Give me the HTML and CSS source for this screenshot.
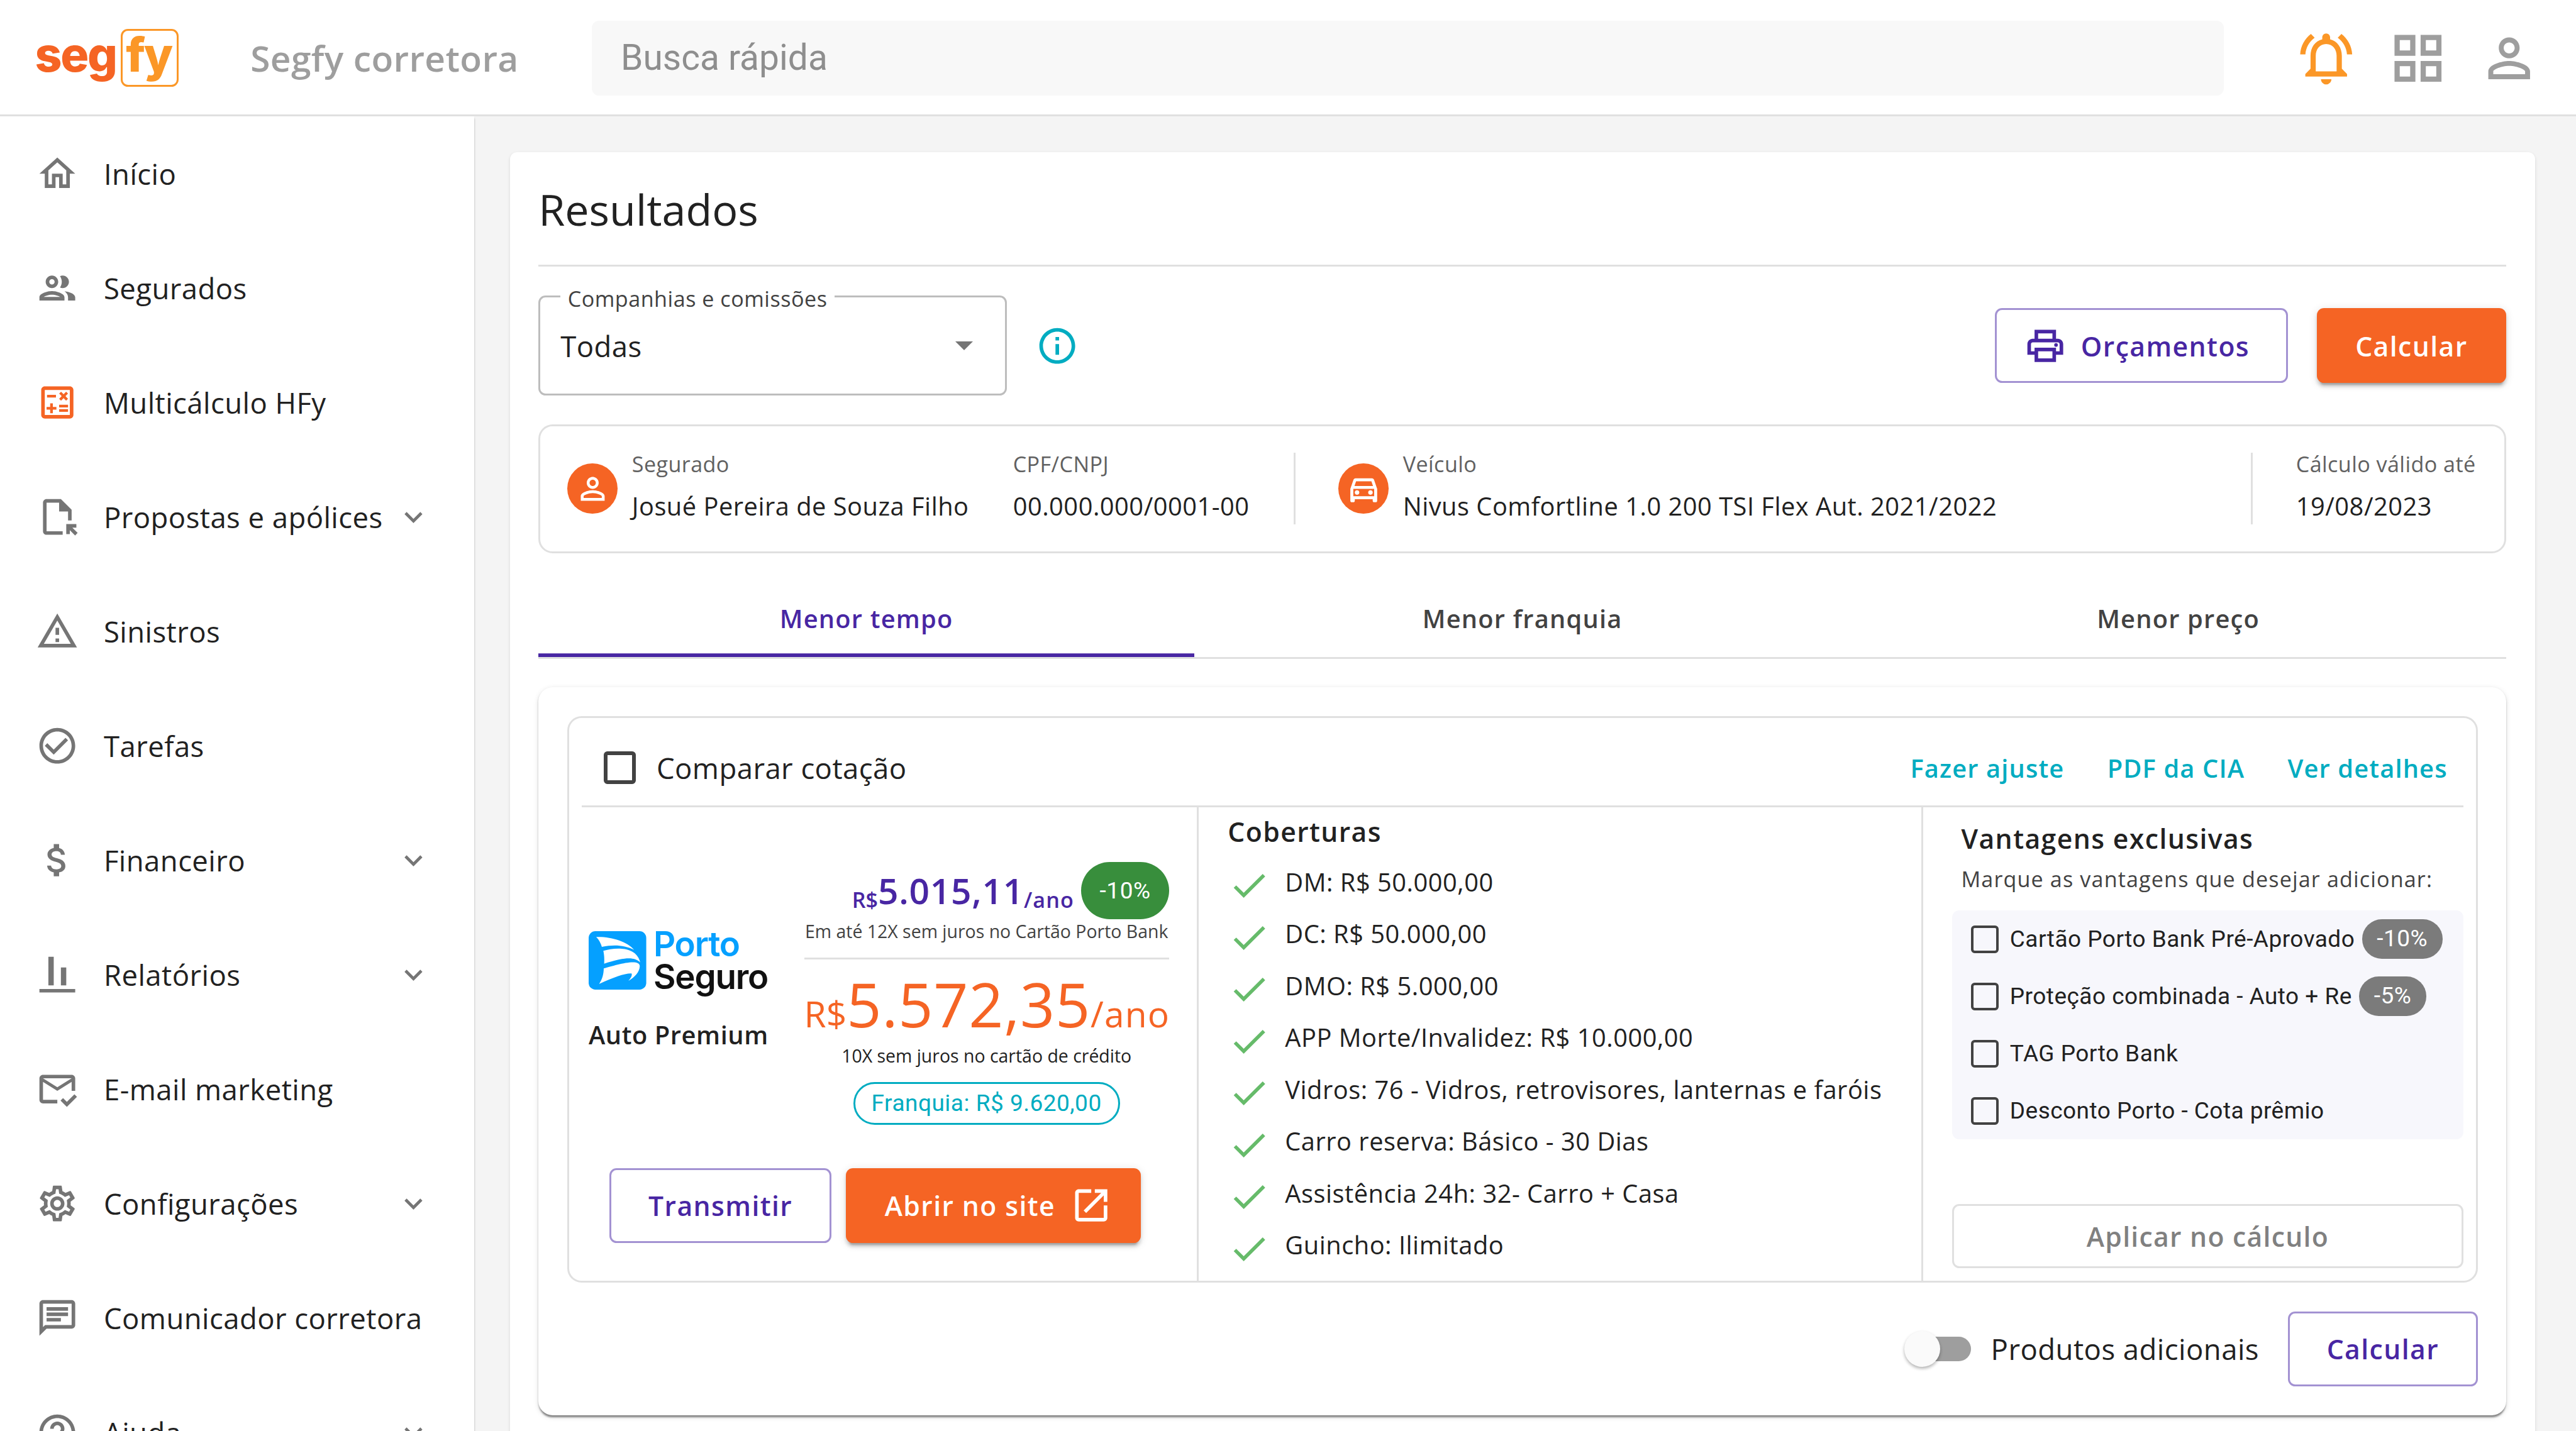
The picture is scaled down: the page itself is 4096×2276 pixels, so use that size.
FILE: index.html
```html
<!DOCTYPE html>
<html lang="pt-BR">
<head>
  <meta charset="UTF-8"/>
  <meta name="viewport" content="width=device-width, initial-scale=1"/>
  <title>Segfy - Resultados</title>
  <link rel="stylesheet" href="styles.css">
</head>
<body>
  <header class="topbar">
    <div class="logo"><span class="logo-seg">seg</span><span class="logo-fy">fy</span></div>
    <div class="company">Segfy corretora</div>
    <div class="search">Busca rápida</div>
    <div class="topbar-icons">
      <svg class="bell" viewBox="0 0 24 24"><path d="M12 22c1.1 0 2-.9 2-2h-4c0 1.1.9 2 2 2zm6-6v-5c0-3.07-1.63-5.64-4.5-6.32V4c0-.83-.67-1.5-1.5-1.5s-1.5.67-1.5 1.5v.68C7.64 5.36 6 7.92 6 11v5l-2 2v1h16v-1l-2-2zm-2 1H8v-6c0-2.48 1.51-4.5 4-4.5s4 2.02 4 4.5v6zM7.58 4.08L6.15 2.65C3.75 4.48 2.17 7.3 2.03 10.5h2c.15-2.65 1.51-4.97 3.55-6.42zm12.39 6.42h2c-.15-3.2-1.73-6.02-4.12-7.85l-1.42 1.43c2.02 1.45 3.39 3.77 3.54 6.42z"/></svg>
      <svg viewBox="0 0 24 24"><path d="M3 3v8h8V3H3zm6 6H5V5h4v4zm-6 4v8h8v-8H3zm6 6H5v-4h4v4zm4-16v8h8V3h-8zm6 6h-4V5h4v4zm-6 4v8h8v-8h-8zm6 6h-4v-4h4v4z"/></svg>
      <svg viewBox="0 0 24 24"><path d="M12 5.9c1.16 0 2.1.94 2.1 2.1s-.94 2.1-2.1 2.1S9.9 9.16 9.9 8s.94-2.1 2.1-2.1m0 9c2.97 0 6.1 1.46 6.1 2.1v1.1H5.9V17c0-.64 3.13-2.1 6.1-2.1M12 4C9.79 4 8 5.79 8 8s1.79 4 4 4 4-1.79 4-4-1.79-4-4-4zm0 9c-2.67 0-8 1.34-8 4v3h16v-3c0-2.66-5.33-4-8-4z"/></svg>
    </div>
  </header>

  <div class="layout">
    <nav class="sidebar">
      <a class="nav-item">
        <svg viewBox="0 0 24 24"><path d="M12 5.69l5 4.5V18h-2v-6H9v6H7v-7.81l5-4.5M12 3L2 12h3v8h6v-6h2v6h6v-8h3L12 3z"/></svg>
        <span>Início</span>
      </a>
      <a class="nav-item">
        <svg viewBox="0 0 24 24"><path d="M9 13.75c-2.34 0-7 1.17-7 3.5V19h14v-1.75c0-2.33-4.66-3.5-7-3.5zM4.34 17c.84-.58 2.87-1.25 4.66-1.25s3.82.67 4.66 1.25H4.34zM9 12c1.93 0 3.5-1.57 3.5-3.5S10.93 5 9 5 5.5 6.57 5.5 8.5 7.07 12 9 12zm0-5c.83 0 1.5.67 1.5 1.5S9.83 10 9 10s-1.5-.67-1.5-1.5S8.17 7 9 7zm7.04 6.81c1.16.84 1.96 1.96 1.96 3.44V19h4v-1.75c0-2.02-3.5-3.17-5.96-3.44zM15 12c1.93 0 3.5-1.57 3.5-3.5S16.93 5 15 5c-.54 0-1.04.13-1.5.35.63.89 1 1.98 1 3.15s-.37 2.26-1 3.15c.46.22.96.35 1.5.35z"/></svg>
        <span>Segurados</span>
      </a>
      <a class="nav-item active">
        <svg viewBox="0 0 24 24"><path d="M19 3H5c-1.1 0-2 .9-2 2v14c0 1.1.9 2 2 2h14c1.1 0 2-.9 2-2V5c0-1.1-.9-2-2-2zm0 16H5V5h14v14z"/><path d="M6.25 7.72h5v1.5h-5zM13 15.75h5v1.5h-5zM13 13.25h5v1.5h-5zM8 18h1.5v-2h2v-1.5h-2v-2H8v2H6V16h2zM14.09 10.95l1.41-1.41 1.41 1.41 1.06-1.06-1.41-1.42 1.41-1.41L16.91 6 15.5 7.41 14.09 6l-1.06 1.06 1.41 1.41-1.41 1.42z"/></svg>
        <span>Multicálculo HFy</span>
      </a>
      <a class="nav-item">
        <svg viewBox="0 0 24 24"><path d="M15 22H6c-1.1 0-2-.9-2-2V4c0-1.1.9-2 2-2h8l6 6v6h-2V9h-5V4H6v16h9v2zM19 21.66v-2.24l2.95 2.95 1.41-1.41L20.41 18h2.24v-2H17v5.66h2z"/></svg>
        <span>Propostas e apólices</span>
        <svg class="chevron" viewBox="0 0 24 24"><path d="M16.59 8.59L12 13.17 7.41 8.59 6 10l6 6 6-6z"/></svg>
      </a>
      <a class="nav-item">
        <svg viewBox="0 0 24 24"><path d="M12 5.99L19.53 19H4.47L12 5.99M12 2L1 21h22L12 2zm1 14h-2v2h2v-2zm0-6h-2v4h2v-4z"/></svg>
        <span>Sinistros</span>
      </a>
      <a class="nav-item">
        <svg viewBox="0 0 24 24"><path d="M12 2C6.48 2 2 6.48 2 12s4.48 10 10 10 10-4.48 10-10S17.52 2 12 2zm0 18c-4.41 0-8-3.59-8-8s3.59-8 8-8 8 3.59 8 8-3.59 8-8 8zm4.59-12.42L10 14.17l-3.59-3.58L5 12l5 5 8-8-1.41-1.42z"/></svg>
        <span>Tarefas</span>
      </a>
      <a class="nav-item">
        <svg viewBox="0 0 24 24"><path d="M11.8 10.9c-2.27-.59-3-1.2-3-2.15 0-1.09 1.01-1.85 2.7-1.85 1.78 0 2.44.85 2.5 2.1h2.21c-.07-1.72-1.12-3.3-3.21-3.81V3h-3v2.16c-1.94.42-3.5 1.68-3.5 3.61 0 2.31 1.91 3.46 4.7 4.13 2.5.6 3 1.48 3 2.41 0 .69-.49 1.79-2.7 1.79-2.06 0-2.87-.92-2.98-2.1h-2.2c.12 2.19 1.76 3.42 3.68 3.83V21h3v-2.15c1.95-.37 3.5-1.5 3.5-3.55 0-2.84-2.43-3.81-4.7-4.4z"/></svg>
        <span>Financeiro</span>
        <svg class="chevron" viewBox="0 0 24 24"><path d="M16.59 8.59L12 13.17 7.41 8.59 6 10l6 6 6-6z"/></svg>
      </a>
      <a class="nav-item">
        <svg viewBox="0 0 24 24"><path d="M22 22H2v-2h20v2zM10 2H7v16h3V2zm7 6h-3v10h3V8z"/></svg>
        <span>Relatórios</span>
        <svg class="chevron" viewBox="0 0 24 24"><path d="M16.59 8.59L12 13.17 7.41 8.59 6 10l6 6 6-6z"/></svg>
      </a>
      <a class="nav-item">
        <svg viewBox="0 0 24 24"><path d="M12 18H4V8l8 5 8-5v5h2V6c0-1.1-.9-2-2-2H4c-1.1 0-2 .9-2 2v12c0 1.1.9 2 2 2h8v-2zm8-12l-8 5-8-5h16zM17.34 22l-3.54-3.54 1.41-1.41 2.12 2.12 4.24-4.24L23 16.34 17.34 22z"/></svg>
        <span>E-mail marketing</span>
      </a>
      <a class="nav-item">
        <svg viewBox="0 0 24 24"><path d="M19.43 12.98c.04-.32.07-.64.07-.98 0-.34-.03-.66-.07-.98l2.11-1.65c.19-.15.24-.42.12-.64l-2-3.46c-.09-.16-.26-.25-.44-.25-.06 0-.12.01-.17.03l-2.49 1c-.52-.4-1.08-.73-1.69-.98l-.38-2.65C14.46 2.18 14.25 2 14 2h-4c-.25 0-.46.18-.49.42l-.38 2.65c-.61.25-1.17.59-1.69.98l-2.49-1c-.06-.02-.12-.03-.18-.03-.17 0-.34.09-.43.25l-2 3.46c-.13.22-.07.49.12.64l2.11 1.65c-.04.32-.07.65-.07.98 0 .33.03.66.07.98l-2.11 1.65c-.19.15-.24.42-.12.64l2 3.46c.09.16.26.25.44.25.06 0 .12-.01.17-.03l2.49-1c.52.4 1.08.73 1.69.98l.38 2.65c.03.24.24.42.49.42h4c.25 0 .46-.18.49-.42l.38-2.65c.61-.25 1.17-.59 1.69-.98l2.49 1c.06.02.12.03.18.03.17 0 .34-.09.43-.25l2-3.46c.12-.22.07-.49-.12-.64l-2.11-1.65zm-1.98-1.71c.04.31.05.52.05.73 0 .21-.02.43-.05.73l-.14 1.13.89.7 1.08.84-.7 1.21-1.27-.51-1.04-.42-.9.68c-.43.32-.84.56-1.25.73l-1.06.43-.16 1.13-.2 1.35h-1.4l-.19-1.35-.16-1.13-1.06-.43c-.43-.18-.83-.41-1.23-.71l-.91-.7-1.06.43-1.27.51-.7-1.21 1.08-.84.89-.7-.14-1.13c-.03-.31-.05-.54-.05-.74s.02-.43.05-.73l.14-1.13-.89-.7-1.08-.84.7-1.21 1.27.51 1.04.42.9-.68c.43-.32.84-.56 1.25-.73l1.06-.43.16-1.13.2-1.35h1.39l.19 1.35.16 1.13 1.06.43c.43.18.83.41 1.23.71l.91.7 1.06-.43 1.27-.51.7 1.21-1.07.85-.89.7.14 1.13zM12 8c-2.21 0-4 1.79-4 4s1.79 4 4 4 4-1.79 4-4-1.79-4-4-4zm0 6c-1.1 0-2-.9-2-2s.9-2 2-2 2 .9 2 2-.9 2-2 2z"/></svg>
        <span>Configurações</span>
        <svg class="chevron" viewBox="0 0 24 24"><path d="M16.59 8.59L12 13.17 7.41 8.59 6 10l6 6 6-6z"/></svg>
      </a>
      <a class="nav-item">
        <svg viewBox="0 0 24 24"><path d="M4 4h16v12H5.17L4 17.17V4m0-2c-1.1 0-1.99.9-1.99 2L2 22l4-4h14c1.1 0 2-.9 2-2V4c0-1.1-.9-2-2-2H4zm2 10h8v2H6v-2zm0-3h12v2H6V9zm0-3h12v2H6V6z"/></svg>
        <span>Comunicador corretora</span>
      </a>
      <a class="nav-item">
        <svg viewBox="0 0 24 24"><path d="M11 18h2v-2h-2v2zm1-16C6.48 2 2 6.48 2 12s4.48 10 10 10 10-4.48 10-10S17.52 2 12 2zm0 18c-4.41 0-8-3.59-8-8s3.59-8 8-8 8 3.59 8 8-3.59 8-8 8zm0-14c-2.21 0-4 1.79-4 4h2c0-1.1.9-2 2-2s2 .9 2 2c0 2-3 1.75-3 5h2c0-2.25 3-2.5 3-5 0-2.21-1.79-4-4-4z"/></svg>
        <span>Ajuda</span>
        <svg class="chevron" viewBox="0 0 24 24"><path d="M16.59 8.59L12 13.17 7.41 8.59 6 10l6 6 6-6z"/></svg>
      </a>
    </nav>

    <main class="content">
      <section class="page">
        <h1>Resultados</h1>

        <div class="toolbar">
          <div class="select">
            <span class="select-label">Companhias e comissões</span>
            <span class="select-value">Todas</span>
            <span class="select-arrow"></span>
          </div>
          <svg class="info" viewBox="0 0 24 24"><path d="M11 7h2v2h-2zm0 4h2v6h-2zm1-9C6.48 2 2 6.48 2 12s4.48 10 10 10 10-4.48 10-10S17.52 2 12 2zm0 18c-4.41 0-8-3.59-8-8s3.59-8 8-8 8 3.59 8 8-3.59 8-8 8z"/></svg>
          <button class="btn btn-outline btn-print">
            <svg viewBox="0 0 24 24"><path d="M19 8h-1V3H6v5H5c-1.66 0-3 1.34-3 3v6h4v4h12v-4h4v-6c0-1.66-1.34-3-3-3zM8 5h8v3H8V5zm8 12v2H8v-4h8v2zm2-2v-2H6v2H4v-4c0-.55.45-1 1-1h14c.55 0 1 .45 1 1v4h-2z"/><circle cx="18" cy="11.5" r="1"/></svg>
            <span>Orçamentos</span>
          </button>
          <button class="btn btn-solid">Calcular</button>
        </div>

        <div class="summary">
          <div class="avatar"><svg viewBox="0 0 24 24"><path d="M12 5.9c1.16 0 2.1.94 2.1 2.1s-.94 2.1-2.1 2.1S9.9 9.16 9.9 8s.94-2.1 2.1-2.1m0 9c2.97 0 6.1 1.46 6.1 2.1v1.1H5.9V17c0-.64 3.13-2.1 6.1-2.1M12 4C9.79 4 8 5.79 8 8s1.79 4 4 4 4-1.79 4-4-1.79-4-4-4zm0 9c-2.67 0-8 1.34-8 4v3h16v-3c0-2.66-5.33-4-8-4z"/></svg></div>
          <div class="field field-name"><span>Segurado</span><strong>Josué Pereira de Souza Filho</strong></div>
          <div class="field field-doc"><span>CPF/CNPJ</span><strong>00.000.000/0001-00</strong></div>
          <div class="avatar"><svg viewBox="0 0 24 24"><path d="M18.92 6.01C18.72 5.42 18.16 5 17.5 5h-11c-.66 0-1.21.42-1.42 1.01L3 12v8c0 .55.45 1 1 1h1c.55 0 1-.45 1-1v-1h12v1c0 .55.45 1 1 1h1c.55 0 1-.45 1-1v-8l-2.08-5.99zM6.85 7h10.29l1.08 3.11H5.77L6.85 7zM19 17H5v-5h14v5z"/><circle cx="7.5" cy="14.5" r="1.5"/><circle cx="16.5" cy="14.5" r="1.5"/></svg></div>
          <div class="field"><span>Veículo</span><strong>Nivus Comfortline 1.0 200 TSI Flex Aut. 2021/2022</strong></div>
          <div class="field field-date"><span>Cálculo válido até</span><strong>19/08/2023</strong></div>
        </div>

        <div class="tabs">
          <div class="tab selected">Menor tempo</div>
          <div class="tab">Menor franquia</div>
          <div class="tab">Menor preço</div>
        </div>

        <div class="result">
          <div class="quote">
            <div class="quote-head">
              <span class="checkbox"></span>
              <span class="compare">Comparar cotação</span>
              <a class="link">Fazer ajuste</a>
              <a class="link">PDF da CIA</a>
              <a class="link">Ver detalhes</a>
            </div>
            <div class="quote-body">
              <div class="col-price">
                <div class="offer">
                  <div class="insurer">
                    <div class="porto">
                      <svg viewBox="0 0 275 279">
                        <rect width="275" height="279" rx="32" fill="#05a0ff"/>
                        <path fill="#fff" d="M36 28C105 25 185 50 217 89C170 66 120 63 63 75C58 58 50 42 36 28zM70 94C125 78 228 70 246 149C215 118 160 128 74 155C75 135 75 115 70 94zM72 178C120 165 245 125 244 168C243 195 220 220 190 237C204 221 208 212 205 202C175 200 120 220 50 252C65 230 72 205 72 178z"/>
                      </svg>
                      <div class="porto-name"><span>Porto</span><span>Seguro</span></div>
                    </div>
                    <div class="plan">Auto Premium</div>
                  </div>
                  <div class="prices">
                    <div class="price-card">
                      <span class="amount"><small>R$</small>5.015,11<small class="per">/ano</small></span>
                      <span class="badge-green">-10%</span>
                    </div>
                    <div class="note note-soft">Em até 12X sem juros no Cartão Porto Bank</div>
                    <div class="price-full"><small>R$</small>5.572,35<small class="per">/ano</small></div>
                    <div class="note">10X sem juros no cartão de crédito</div>
                    <div class="chip">Franquia: R$ 9.620,00</div>
                  </div>
                </div>
                <div class="actions">
                  <button class="btn btn-outline">Transmitir</button>
                  <button class="btn btn-solid btn-site">
                    <span>Abrir no site</span>
                    <svg viewBox="0 0 24 24"><path d="M19 19H5V5h7V3H5c-1.11 0-2 .9-2 2v14c0 1.1.89 2 2 2h14c1.1 0 2-.9 2-2v-7h-2v7zM14 3v2h3.59l-9.83 9.83 1.41 1.41L19 6.41V10h2V3h-7z"/></svg>
                  </button>
                </div>
              </div>

              <div class="col-cover">
                <h2>Coberturas</h2>
                <ul class="covers">
                  <li><svg viewBox="0 0 24 24"><path d="M9 16.2L4.8 12l-1.4 1.4L9 19 21 7l-1.4-1.4L9 16.2z"/></svg>DM: R$ 50.000,00</li>
                  <li><svg viewBox="0 0 24 24"><path d="M9 16.2L4.8 12l-1.4 1.4L9 19 21 7l-1.4-1.4L9 16.2z"/></svg>DC: R$ 50.000,00</li>
                  <li><svg viewBox="0 0 24 24"><path d="M9 16.2L4.8 12l-1.4 1.4L9 19 21 7l-1.4-1.4L9 16.2z"/></svg>DMO: R$ 5.000,00</li>
                  <li><svg viewBox="0 0 24 24"><path d="M9 16.2L4.8 12l-1.4 1.4L9 19 21 7l-1.4-1.4L9 16.2z"/></svg>APP Morte/Invalidez: R$ 10.000,00</li>
                  <li><svg viewBox="0 0 24 24"><path d="M9 16.2L4.8 12l-1.4 1.4L9 19 21 7l-1.4-1.4L9 16.2z"/></svg>Vidros: 76 - Vidros, retrovisores, lanternas e faróis</li>
                  <li><svg viewBox="0 0 24 24"><path d="M9 16.2L4.8 12l-1.4 1.4L9 19 21 7l-1.4-1.4L9 16.2z"/></svg>Carro reserva: Básico - 30 Dias</li>
                  <li><svg viewBox="0 0 24 24"><path d="M9 16.2L4.8 12l-1.4 1.4L9 19 21 7l-1.4-1.4L9 16.2z"/></svg>Assistência 24h: 32- Carro + Casa</li>
                  <li><svg viewBox="0 0 24 24"><path d="M9 16.2L4.8 12l-1.4 1.4L9 19 21 7l-1.4-1.4L9 16.2z"/></svg>Guincho: Ilimitado</li>
                </ul>
              </div>

              <div class="col-perks">
                <h2>Vantagens exclusivas</h2>
                <p>Marque as vantagens que desejar adicionar:</p>
                <ul class="perks">
                  <li><span class="checkbox small"></span>Cartão Porto Bank Pré-Aprovado<span class="badge">-10%</span></li>
                  <li><span class="checkbox small"></span>Proteção combinada - Auto + Re<span class="badge">-5%</span></li>
                  <li><span class="checkbox small"></span>TAG Porto Bank</li>
                  <li><span class="checkbox small"></span>Desconto Porto - Cota prêmio</li>
                </ul>
                <button class="btn btn-disabled">Aplicar no cálculo</button>
              </div>
            </div>
          </div>

          <div class="result-foot">
            <span class="toggle"></span>
            <span class="toggle-label">Produtos adicionais</span>
            <button class="btn btn-outline">Calcular</button>
          </div>
        </div>
      </section>
    </main>
  </div>
</body>
</html>
```
FILE: styles.css
```css
/* 1rem = 10px on a 1440px wide layout */
html {
  --line: .106rem;
  font-size: calc(100vw / 144);
}

*, *::before, *::after {
  box-sizing: border-box;
}

body {
  margin: 0;
  height: 100vh;
  overflow: hidden;
  background: #f4f4f4;
  color: #212121;
  font-family: "Open Sans", "Noto Sans", sans-serif;
  font-size: 1.6rem;
}

h1, h2, p, ul {
  margin: 0;
  padding: 0;
  font-weight: 400;
}
ul { list-style: none; }
svg {
  display: block;
  flex: none;
  fill: currentColor;
}

/* Top bar */
.topbar {
  display: flex;
  align-items: center;
  height: 6.5rem;
  padding: .1rem 2rem 0 1.95rem;
  background: #fff;
  border-bottom: var(--line) solid #e0e0e0;
}
.logo {
  display: flex;
  align-items: center;
  width: 12.05rem;
  font-family: Inter, sans-serif;
  font-size: 2.64rem;
  font-weight: 800;
  line-height: 1;
}
.logo-seg {
  width: 4.8rem;
  padding-bottom: .38rem;
  color: #f56424;
  letter-spacing: -.08rem;
}
.logo-fy {
  width: 3.23rem;
  height: 3.23rem;
  padding-right: .1rem;
  line-height: 2.64rem;
  text-align: center;
  color: #fb9727;
  letter-spacing: -.08rem;
  border: var(--line) solid #fb9727;
  border-radius: .4rem;
}
.company {
  width: 19.1rem;
  font-size: 2rem;
  font-weight: 600;
  letter-spacing: .013rem;
  color: #9e9e9e;
}
.search {
  width: 91.2rem;
  height: 4.2rem;
  padding: 0 1.6rem;
  line-height: 4.15rem;
  font-family: Roboto, sans-serif;
  font-size: 2rem;
  color: #8e8e8e;
  background: #f8f8f8;
  border-radius: .4rem;
}
.topbar-icons {
  display: flex;
  gap: 1.6rem;
  margin-left: auto;
  color: #9e9e9e;
}
.topbar-icons svg {
  width: 3.5rem;
  height: 3.5rem;
}
.topbar-icons .bell { color: #fb9727; }

.layout {
  display: flex;
  height: calc(100vh - 6.5rem);
}

/* Sidebar */
.sidebar {
  flex: none;
  width: 26.5rem;
  overflow: hidden;
  background: #fff;
  box-shadow: 0 .1rem .1rem rgba(0, 0, 0, .3);
}
.nav-item {
  display: flex;
  align-items: center;
  height: 6.4rem;
  padding: 0 2.4rem 0 2rem;
  letter-spacing: .015rem;
  white-space: nowrap;
}
.nav-item svg {
  width: 2.4rem;
  height: 2.4rem;
  margin-right: 1.4rem;
  color: #757575;
}
.nav-item.active svg { color: #f56424; }
.nav-item .chevron {
  width: 2rem;
  height: 2rem;
  margin: 0 0 0 auto;
}

/* Page */
.content {
  flex: 1;
  min-width: 0;
  padding: 2rem 2.3rem 0 2rem;
  overflow: hidden;
}
.page {
  height: 80rem;
  padding: 1.6rem;
  background: #fff;
  border-radius: .4rem;
  box-shadow: 0 .1rem .2rem rgba(0, 0, 0, .12);
}
h1 {
  padding-bottom: 1.5rem;
  font-size: 2.4rem;
  line-height: 3.2rem;
  border-bottom: var(--line) solid #e0e0e0;
}

/* Buttons */
.btn {
  display: flex;
  align-items: center;
  justify-content: center;
  gap: .8rem;
  height: 4.2rem;
  margin: 0;
  padding: 0 2.1rem;
  font-family: inherit;
  font-size: 1.5rem;
  font-weight: 600;
  letter-spacing: .05rem;
  white-space: nowrap;
  border: var(--line) solid transparent;
  border-radius: .4rem;
}
.btn svg {
  width: 2.4rem;
  height: 2.4rem;
}
.btn-outline {
  color: #4826a3;
  background: #fff;
  border-color: #a392d2;
}
.btn-solid {
  color: #fff;
  background: #f56424;
  box-shadow: 0 .3rem .1rem -.2rem rgba(0, 0, 0, .2), 0 .2rem .2rem rgba(0, 0, 0, .14), 0 .1rem .5rem rgba(0, 0, 0, .12);
}
.btn-disabled {
  height: 3.6rem;
  margin-top: auto;
  letter-spacing: .045rem;
  color: #808080;
  background: #fff;
  border-color: #e0e0e0;
}

/* Toolbar */
.toolbar {
  display: flex;
  align-items: center;
  gap: 1.6rem;
  margin-top: 1.62rem;
}
.select {
  position: relative;
  display: flex;
  align-items: center;
  justify-content: space-between;
  width: 26.2rem;
  height: 5.6rem;
  padding: 0 1.8rem 0 1.13rem;
  letter-spacing: .015rem;
  border: var(--line) solid #bdbdbd;
  border-radius: .4rem;
}
.select-label {
  position: absolute;
  top: -.82rem;
  left: 1.13rem;
  padding: 0 .4rem;
  font-size: 1.2rem;
  line-height: 1.8rem;
  letter-spacing: .018rem;
  color: #424242;
  background: #fff;
}
.select-arrow {
  border: .5rem solid transparent;
  border-top-color: #757575;
  border-bottom: 0;
}
.info {
  width: 2.4rem;
  height: 2.4rem;
  color: #00acc1;
}
.btn-print {
  justify-content: flex-start;
  width: 16.4rem;
  margin-left: auto;
  padding: 0 0 0 1.52rem;
}
.toolbar .btn-solid,
.result-foot .btn { width: 10.6rem; }

/* Summary */
.summary {
  display: flex;
  align-items: center;
  height: 7.2rem;
  margin-top: 1.6rem;
  padding: 0 1.6rem 0 1.52rem;
  border: var(--line) solid #e0e0e0;
  border-radius: .8rem;
}
.avatar {
  display: flex;
  align-items: center;
  justify-content: center;
  width: 2.8rem;
  height: 2.8rem;
  margin-right: .8rem;
  color: #fff;
  background: #f56424;
  border-radius: 50%;
}
.avatar svg {
  width: 2rem;
  height: 2rem;
}
.field {
  display: flex;
  flex-direction: column;
  justify-content: space-between;
  height: 4rem;
}
.field span {
  font-size: 1.2rem;
  line-height: 1.3rem;
  letter-spacing: .015rem;
  color: #616161;
}
.field strong {
  font-size: 1.4rem;
  font-weight: 400;
  line-height: 2rem;
  letter-spacing: .0175rem;
}
.field-name { width: 21.3rem; }
.field-doc {
  width: 15.8rem;
  margin-right: 2.4rem;
  border-right: var(--line) solid #e0e0e0;
}
.field-date {
  margin-left: auto;
  padding-left: 2.4rem;
  border-left: var(--line) solid #e0e0e0;
}

/* Tabs */
.tabs {
  display: flex;
  margin-top: 1.6rem;
  border-bottom: var(--line) solid #e0e0e0;
}
.tab {
  flex: 1;
  height: 4.2rem;
  font-size: 1.4rem;
  font-weight: 600;
  line-height: 4.16rem;
  letter-spacing: .042rem;
  text-align: center;
  color: #424242;
}
.tab.selected {
  color: #4826a3;
  box-shadow: inset 0 -.2rem #4826a3;
}

/* Result card */
.result {
  margin-top: 1.6rem;
  padding: 1.6rem;
  border-radius: .8rem;
  box-shadow: 0 .2rem .1rem -.1rem rgba(0, 0, 0, .3), 0 .1rem .1rem rgba(0, 0, 0, .2), 0 .1rem .3rem rgba(0, 0, 0, .12);
}
.quote {
  display: flex;
  flex-direction: column;
  height: 31.7rem;
  padding: .7rem .7rem 0;
  border: var(--line) solid #e0e0e0;
  border-radius: .8rem;
}
.quote-head {
  display: flex;
  align-items: center;
  height: 4.3rem;
  padding: 0 .88rem 0 1.25rem;
  border-bottom: var(--line) solid #e0e0e0;
}
.checkbox {
  flex: none;
  width: 1.8rem;
  height: 1.8rem;
  border: .212rem solid #424242;
  border-radius: .2rem;
}
.checkbox.small {
  width: 1.55rem;
  height: 1.55rem;
  margin-right: .62rem;
  border-width: .15rem;
}
.compare {
  margin: 0 auto 0 1.15rem;
  letter-spacing: .015rem;
}
.link {
  margin-left: 2.4rem;
  font-size: 1.4rem;
  font-weight: 600;
  letter-spacing: .04rem;
  color: #00acc1;
}
.quote-body {
  display: flex;
  flex: 1;
}

/* Price column */
.col-price {
  width: 34.5rem;
  padding: 3.07rem 1.55rem 0 .4rem;
  border-right: var(--line) solid #e0e0e0;
}
.offer {
  display: flex;
  justify-content: space-between;
}
.insurer { padding-top: 3.85rem; }
.porto {
  display: flex;
  align-items: center;
  gap: .4rem;
  height: 3.3rem;
}
.porto svg {
  width: 3.22rem;
  height: 3.27rem;
}
.porto-name {
  display: flex;
  flex-direction: column;
  font-family: Inter, sans-serif;
  font-size: 1.92rem;
  font-weight: 600;
  line-height: 1.86rem;
  letter-spacing: -.04rem;
  color: #111;
}
.porto-name span:first-child {
  font-weight: 600;
  letter-spacing: -.04rem;
  color: #05a0ff;
}
.plan {
  margin-top: 1.55rem;
  font-size: 1.4rem;
  font-weight: 600;
  line-height: 2rem;
  letter-spacing: .02rem;
}
.prices {
  width: 20.4rem;
  text-align: center;
}
.price-card {
  display: flex;
  align-items: center;
  justify-content: flex-end;
  gap: .4rem;
  height: 3.2rem;
  color: #4826a3;
}
.amount {
  font-size: 2rem;
  font-weight: 600;
  line-height: 3.2rem;
  letter-spacing: .025rem;
}
.amount small {
  font-size: 1.2rem;
  line-height: 1;
  letter-spacing: 0;
  vertical-align: -.2rem;
}
.badge-green {
  width: 4.9rem;
  font-family: Roboto, sans-serif;
  font-size: 1.3rem;
  line-height: 3.2rem;
  letter-spacing: .02rem;
  color: #fff;
  background: #388e3c;
  border-radius: 1.6rem;
}
.note {
  font-size: 1rem;
  line-height: 1.4rem;
  white-space: nowrap;
}
.note-soft {
  padding-bottom: .75rem;
  color: #424242;
  border-bottom: var(--line) solid #e0e0e0;
}
.price-full {
  margin: .5rem 0 .2rem;
  font-size: 3.4rem;
  line-height: 4rem;
  letter-spacing: .025rem;
  white-space: nowrap;
  color: #f56424;
}
.price-full small {
  font-size: 2rem;
  line-height: 1;
  letter-spacing: 0;
}
.amount .per,
.price-full .per { letter-spacing: .04rem; }
.chip {
  width: 14.9rem;
  height: 2.4rem;
  margin: .75rem auto 0;
  font-family: Roboto, sans-serif;
  font-size: 1.3rem;
  line-height: 2.2rem;
  letter-spacing: .018rem;
  color: #00acc1;
  border: var(--line) solid #00acc1;
  border-radius: 1.2rem;
}
.actions {
  display: flex;
  justify-content: center;
  gap: .8rem;
  margin: 2.4rem .4rem 0 0;
}
.actions .btn { width: 12.4rem; }
.actions .btn-site {
  gap: .8rem;
  width: 16.5rem;
  padding: 0 1.5rem 0 2.1rem;
}

/* Coverages */
h2 {
  font-size: 1.5rem;
  font-weight: 600;
  line-height: 2rem;
  letter-spacing: .05rem;
}
.col-cover {
  width: 40.5rem;
  padding: .35rem 0 0 1.63rem;
  border-right: var(--line) solid #e0e0e0;
}
.covers { padding-top: .37rem; }
.covers li {
  display: flex;
  align-items: center;
  gap: .8rem;
  height: 2.9rem;
  font-size: 1.4rem;
  letter-spacing: .018rem;
}
.covers svg {
  width: 2.4rem;
  height: 2.4rem;
  margin-top: .43rem;
  color: #66bb6a;
}

/* Perks */
.col-perks {
  display: flex;
  flex: 1;
  flex-direction: column;
  min-width: 0;
  padding: .75rem 0 .7rem 1.63rem;
}
.col-perks h2,
.col-perks p { margin-left: .5rem; }
.col-perks p {
  margin-top: .5rem;
  font-size: 1.2rem;
  line-height: 1.6rem;
  letter-spacing: .04rem;
  color: #424242;
  white-space: nowrap;
}
.perks {
  margin-top: .93rem;
  background: #f7f7fc;
  border-radius: .4rem;
}
.perks li {
  display: flex;
  align-items: center;
  height: 3.2rem;
  padding-left: 1.05rem;
  font-family: Roboto, sans-serif;
  font-size: 1.3rem;
  letter-spacing: .017rem;
  white-space: nowrap;
}
.badge {
  margin-left: .4rem;
  padding: 0 .83rem;
  line-height: 2.2rem;
  color: #fff;
  background: #7b7b7b;
  border-radius: 1.1rem;
}

/* Footer */
.result-foot {
  display: flex;
  align-items: center;
  justify-content: flex-end;
  margin-top: 1.6rem;
}
.toggle {
  position: relative;
  width: 3.6rem;
  height: 1.4rem;
  background: #9e9e9e;
  border-radius: .7rem;
}
.toggle::before {
  content: "";
  position: absolute;
  top: -.3rem;
  left: -.1rem;
  width: 2rem;
  height: 2rem;
  background: #fafafa;
  border-radius: 50%;
  box-shadow: 0 .1rem .2rem rgba(0, 0, 0, .3);
}
.toggle-label {
  margin: 0 1.62rem 0 1.12rem;
  letter-spacing: .016rem;
}
```
